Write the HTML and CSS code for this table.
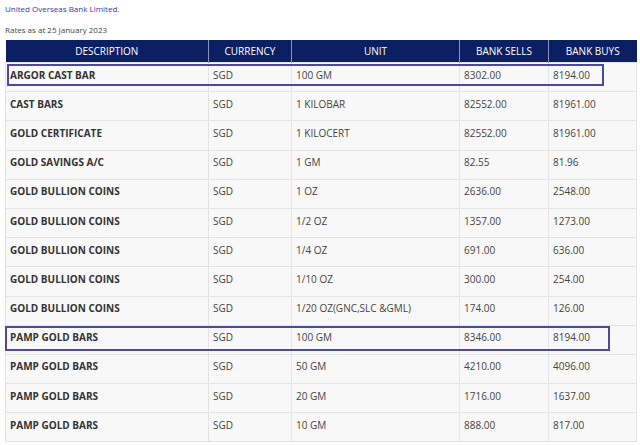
FILE: index.html
```html
<!DOCTYPE html>
<html>
<head>
<meta charset="utf-8">
<link rel="stylesheet" href="styles.css">
</head>
<body>
<div class="page">
  <p class="bank">United Overseas Bank Limited.</p>
  <p class="asat">Rates as at 25 January 2023</p>
  <div class="wrap">
    <table class="rates">
      <colgroup>
        <col class="c1"><col class="c2"><col class="c3"><col class="c4"><col class="c5">
      </colgroup>
      <thead>
        <tr><th>DESCRIPTION</th><th>CURRENCY</th><th>UNIT</th><th>BANK SELLS</th><th>BANK BUYS</th></tr>
      </thead>
      <tbody>
        <tr><td class="d">ARGOR CAST BAR</td><td>SGD</td><td>100 GM</td><td>8302.00</td><td>8194.00</td></tr>
        <tr><td class="d">CAST BARS</td><td>SGD</td><td>1 KILOBAR</td><td>82552.00</td><td>81961.00</td></tr>
        <tr><td class="d">GOLD CERTIFICATE</td><td>SGD</td><td>1 KILOCERT</td><td>82552.00</td><td>81961.00</td></tr>
        <tr><td class="d">GOLD SAVINGS A/C</td><td>SGD</td><td>1 GM</td><td>82.55</td><td>81.96</td></tr>
        <tr><td class="d">GOLD BULLION COINS</td><td>SGD</td><td>1 OZ</td><td>2636.00</td><td>2548.00</td></tr>
        <tr><td class="d">GOLD BULLION COINS</td><td>SGD</td><td>1/2 OZ</td><td>1357.00</td><td>1273.00</td></tr>
        <tr><td class="d">GOLD BULLION COINS</td><td>SGD</td><td>1/4 OZ</td><td>691.00</td><td>636.00</td></tr>
        <tr><td class="d">GOLD BULLION COINS</td><td>SGD</td><td>1/10 OZ</td><td>300.00</td><td>254.00</td></tr>
        <tr><td class="d">GOLD BULLION COINS</td><td>SGD</td><td>1/20 OZ(GNC,SLC &amp;GML)</td><td>174.00</td><td>126.00</td></tr>
        <tr><td class="d">PAMP GOLD BARS</td><td>SGD</td><td>100 GM</td><td>8346.00</td><td>8194.00</td></tr>
        <tr><td class="d">PAMP GOLD BARS</td><td>SGD</td><td>50 GM</td><td>4210.00</td><td>4096.00</td></tr>
        <tr><td class="d">PAMP GOLD BARS</td><td>SGD</td><td>20 GM</td><td>1716.00</td><td>1637.00</td></tr>
        <tr><td class="d">PAMP GOLD BARS</td><td>SGD</td><td>10 GM</td><td>888.00</td><td>817.00</td></tr>
      </tbody>
    </table>
    <div class="mark mark1"></div>
    <div class="mark mark2"></div>
  </div>
</div>
</body>
</html>
```
FILE: styles.css
```css
html, body {
  margin: 0;
  padding: 0;
  background: #ffffff;
  overflow: hidden;
}
body {
  font-family: "Open Sans", "DejaVu Sans", sans-serif;
  font-size: 10px;
  color: #333333;
}
.page {
  padding: 2px 4px 0 5px;
}
.bank {
  margin: 0;
  height: 13px;
  line-height: 13px;
  font-size: 8px;
  color: #3b36a0;
}
.asat {
  margin: 8px 0 0 0;
  height: 13px;
  line-height: 13px;
  font-size: 8px;
  color: #444444;
}
.wrap {
  position: relative;
  margin-top: 4px;
}
.rates {
  border-collapse: collapse;
  table-layout: fixed;
  width: 631px;
}
.c1 { width: 203px; }
.c2 { width: 83px; }
.c3 { width: 168px; }
.c4 { width: 89px; }
.c5 { width: 88px; }
.rates th {
  background: #0c1f63;
  color: #ffffff;
  font-weight: normal;
  font-size: 10px;
  height: 22px;
  padding: 0;
  text-align: center;
  border-left: 1px solid #8a93b8;
  border-right: 1px solid #8a93b8;
}
.rates th:first-child { border-left: none; }
.rates th:last-child { border-right: none; }
.rates td {
  background: #f8f8f8;
  border: 1px solid #e3e3e3;
  height: 23.2px;
  padding: 0 0 5px 4px;
  font-size: 10px;
  color: #444444;
  white-space: nowrap;
  overflow: hidden;
}
.rates td.d {
  font-weight: bold;
  color: #333333;
}
.mark {
  position: absolute;
  border: 2px solid #4c4a9e;
  box-sizing: border-box;
}
.mark1 {
  left: 2px;
  top: 24px;
  width: 597px;
  height: 22px;
}
.mark2 {
  left: 0px;
  top: 286px;
  width: 605px;
  height: 25px;
}
```
